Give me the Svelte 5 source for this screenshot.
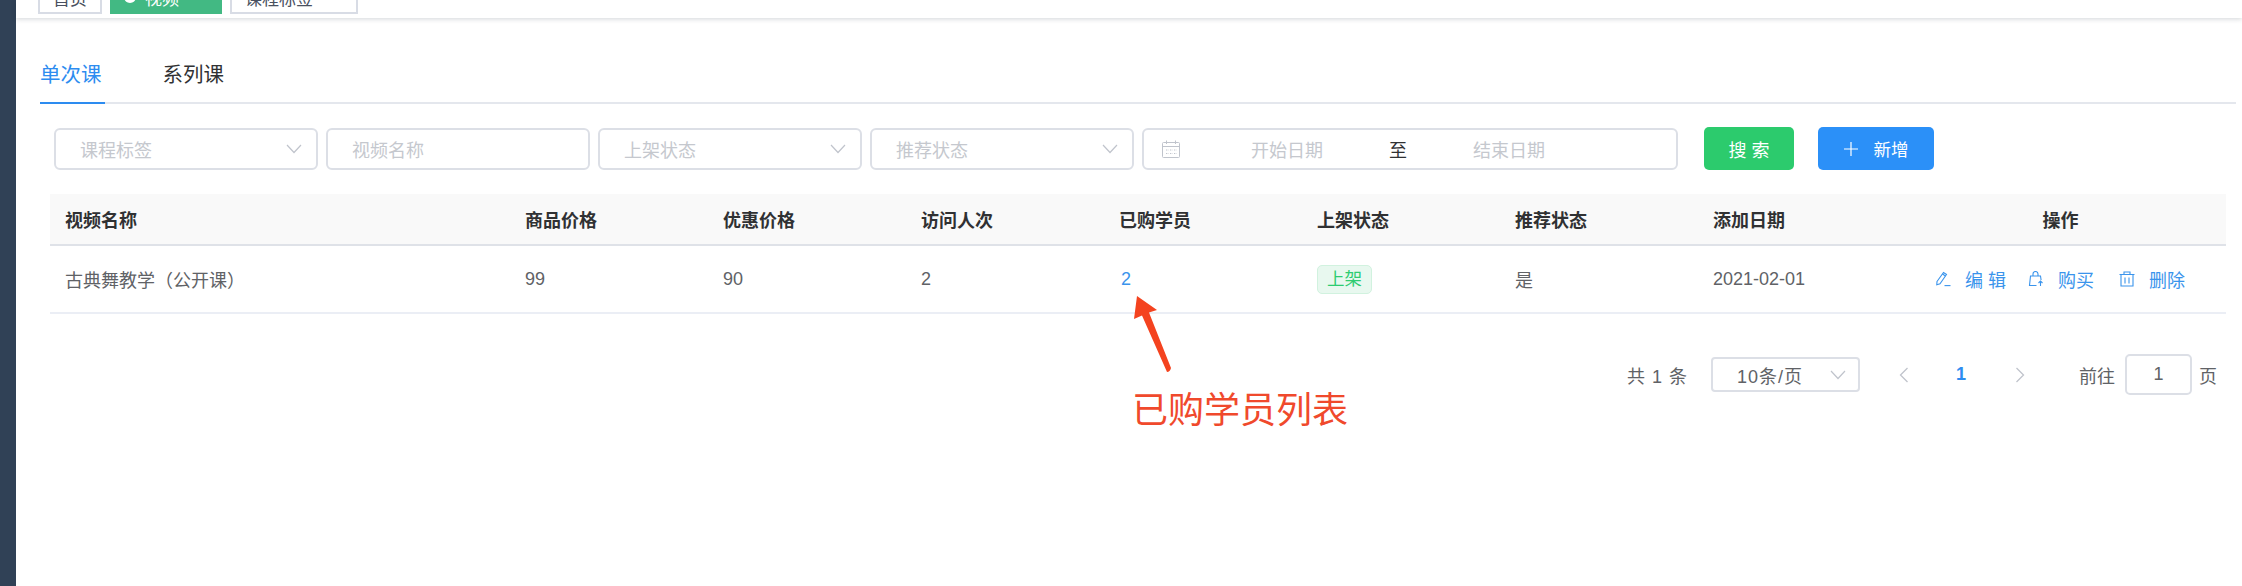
<script>
  const columns = [
    { label: '视频名称', width: 460 },
    { label: '商品价格', width: 198 },
    { label: '优惠价格', width: 198 },
    { label: '访问人次', width: 198 },
    { label: '已购学员', width: 198 },
    { label: '上架状态', width: 198 },
    { label: '推荐状态', width: 198 },
    { label: '添加日期', width: 198 },
    { label: '操作', width: 329, center: true }
  ];
</script>

{#snippet chevron()}
  <svg class="chev" viewBox="0 0 16 10" width="16" height="10"><path d="M1 1l7 7.5L15 1" fill="none" stroke="currentColor" stroke-width="1.2"/></svg>
{/snippet}

<div class="app">
  <aside class="side"></aside>
  <main class="main">
    <div class="topbar">
      <span class="tag">首页</span>
      <span class="tag active"><i class="dot"></i>视频</span>
      <span class="tag wide">课程标签</span>
    </div>

    <div class="content">
      <div class="tabs">
        <span class="tab on">单次课</span>
        <span class="tab">系列课</span>
      </div>

      <div class="filters">
        <div class="field"><span class="ph">课程标签</span>{@render chevron()}</div>
        <div class="field"><span class="ph">视频名称</span></div>
        <div class="field"><span class="ph">上架状态</span>{@render chevron()}</div>
        <div class="field"><span class="ph">推荐状态</span>{@render chevron()}</div>
        <div class="field date">
          <svg class="cal" viewBox="0 0 18 18" width="18" height="18" fill="none" stroke="currentColor" stroke-width="1">
            <rect x="0.5" y="2.5" width="17" height="15" rx="1"/>
            <path d="M0.5 6.5h17M4.5 0.5v3.5M13.5 0.5v3.5"/>
            <path d="M4 10h2.4M8 10h2.4M12 10h2.4M4 13.5h2.4M8 13.5h2.4M12 13.5h2.4" stroke-dasharray="1 .7"/>
          </svg>
          <span class="ph d1">开始日期</span>
          <span class="to">至</span>
          <span class="ph d2">结束日期</span>
        </div>
        <button class="btn search">搜 索</button>
        <button class="btn add">
          <svg class="plus" viewBox="0 0 14 14" width="14" height="14"><path d="M7 0v14M0 7h14" stroke="currentColor" stroke-width="1.2" fill="none"/></svg>
          新增
        </button>
      </div>

      <div class="table">
        <div class="row head">
          {#each columns as c}
            <div class="cell" class:center={c.center} style:width="{c.width}px">{c.label}</div>
          {/each}
        </div>
        <div class="row body">
          <div class="cell" style:width="460px">古典舞教学（公开课）</div>
          <div class="cell" style:width="198px">99</div>
          <div class="cell" style:width="198px">90</div>
          <div class="cell" style:width="198px">2</div>
          <div class="cell link" style:width="198px">2</div>
          <div class="cell" style:width="198px"><span class="status">上架</span></div>
          <div class="cell" style:width="198px">是</div>
          <div class="cell" style:width="198px">2021-02-01</div>
          <div class="cell ops" style:width="329px">
            <span class="op">
              <svg viewBox="0 0 16 16" width="16" height="16" fill="none" stroke="currentColor" stroke-width="1.1">
                <path d="M2 10.5L8.5 1.5l3 2L5 12.8l-3.2 1z"/><path d="M7.5 3l3 2"/><path d="M9.5 14.6h6"/>
              </svg>
              <span class="t1">编 辑</span>
            </span>
            <span class="op">
              <svg viewBox="0 0 16 16" width="16" height="16" fill="none" stroke="currentColor" stroke-width="1.1">
                <path d="M8.5 14.5H1.5l1-9.5h10l.6 4"/><path d="M5 5V3a2.5 2.5 0 0 1 5 0v2"/><path d="M12.5 15V10M10.5 12l2-2 2 2"/>
              </svg>
              <span class="t2">购买</span>
            </span>
            <span class="op">
              <svg viewBox="0 0 16 16" width="16" height="16" fill="none" stroke="currentColor" stroke-width="1.1">
                <path d="M.5 3.5h15M5 3.5V1h6v2.5M2 3.5v11.5h12V3.5M6 6.5v6M10 6.5v6"/>
              </svg>
              <span class="t3">删除</span>
            </span>
          </div>
        </div>
      </div>

      <div class="pager">
        <span class="total">共 1 条</span>
        <div class="size"><span class="size-text">10条/页</span>{@render chevron()}</div>
        <svg class="nav prev" viewBox="0 0 10 16" width="10" height="16"><path d="M8.5 1L1.5 8l7 7" fill="none" stroke="currentColor" stroke-width="1.3"/></svg>
        <span class="num">1</span>
        <svg class="nav next" viewBox="0 0 10 16" width="10" height="16"><path d="M1.5 1l7 7-7 7" fill="none" stroke="currentColor" stroke-width="1.3"/></svg>
        <span class="goto">前往</span>
        <span class="jump">1</span>
        <span class="page">页</span>
      </div>
    </div>
  </main>

  <svg class="arrow" viewBox="0 0 44 80" width="44" height="80">
    <path d="M7 0L27 14L19 16.5L41 72Q40 76 37 76L12 19.5L4 23Z" fill="#f4431f"/>
  </svg>
  <div class="note">已购学员列表</div>
</div>

<style>
  :global(body) { margin: 0; background: #fff; }
  .app {
    position: relative;
    display: flex;
    width: 2242px;
    height: 586px;
    overflow: hidden;
    font-family: "Liberation Sans", "Noto Sans CJK SC", sans-serif;
    color: #606266;
  }
  .side { width: 16px; flex: none; background: #304156; }
  .main { flex: 1; min-width: 0; }

  .topbar {
    height: 18px;
    box-sizing: border-box;
    padding: 0 0 4px 22px;
    display: flex;
    align-items: flex-end;
    gap: 8px;
    box-shadow: 0 1px 5px rgba(0, 21, 41, .18);
    position: relative;
  }
  .tag {
    flex: none;
    height: 34px;
    box-sizing: border-box;
    width: 64px;
    border: 2px solid #d8dce5;
    padding-left: 13px;
    display: flex;
    align-items: center;
    font-size: 17px;
    color: #495060;
  }
  .tag.active { width: 112px; padding-left: 12px; background: #42b983; border-color: #42b983; color: #fff; }
  .tag.wide { width: 128px; }
  .dot { width: 12px; height: 12px; border-radius: 50%; background: #fff; margin-right: 9px; }

  .content { padding: 0 6px 0 24px; }
  .tabs {
    height: 86px;
    box-sizing: border-box;
    display: flex;
    align-items: flex-end;
    gap: 58px;
    border-bottom: 2px solid #e4e7ed;
  }
  .tab {
    font-size: 20.5px;
    line-height: 28px;
    padding: 0 3px 13px 0;
    margin-bottom: -2px;
    color: #303133;
    border-bottom: 2px solid transparent;
  }
  .tab.on { color: #2d8cf0; border-bottom-color: #2d8cf0; }

  .filters {
    margin: 23px 0 0 14px;
    display: flex;
    align-items: center;
    gap: 8px;
  }
  .field {
    position: relative;
    width: 264px;
    height: 42px;
    box-sizing: border-box;
    border: 2px solid #dcdfe6;
    border-radius: 6px;
    padding-left: 24px;
    display: flex;
    align-items: center;
    justify-content: space-between;
    padding-right: 14px;
    font-size: 18px;
    background: #fff;
  }
  .ph { color: #c5c8ce; white-space: nowrap; }
  .chev { color: #c0c4cc; flex: none; }
  .date { width: 536px; justify-content: flex-start; padding-left: 18px; }
  .cal { color: #c0c4cc; flex: none; }
  .d1 { margin-left: 71px; }
  .to { margin-left: 66px; color: #303133; }
  .d2 { margin-left: 66px; }

  .btn {
    height: 43px;
    border: 0;
    border-radius: 5px;
    color: #fff;
    font: inherit;
    font-size: 18px;
    padding: 0;
  }
  .search { width: 90px; margin-left: 18px; background: #2ccb6d; }
  .add { width: 116px; margin-left: 16px; background: #2b90f8; display: flex; align-items: center; justify-content: center; font-size: 17.5px; }
  .plus { margin-right: 16px; flex: none; }

  .table { margin: 24px 0 0 10px; width: 2176px; }
  .row { display: flex; align-items: center; box-sizing: border-box; }
  .head {
    height: 52px;
    background: #f9f9f9;
    border-bottom: 2px solid #dfe2e8;
    font-weight: 700;
    font-size: 18px;
    color: #303133;
  }
  .body {
    height: 68px;
    border-bottom: 2px solid #ebeef5;
    font-size: 18px;
  }
  .cell { box-sizing: border-box; padding-left: 15px; flex: none; white-space: nowrap; }
  .center { text-align: center; padding-left: 0; }
  .link { color: #3a94ec; padding-left: 17px; }
  .status {
    display: inline-block;
    box-sizing: border-box;
    width: 55px;
    height: 29px;
    line-height: 26px;
    text-align: center;
    border-radius: 5px;
    background: #e8f8ef;
    border: 1px solid #d1f2df;
    color: #2ecc71;
    font-size: 17.5px;
  }
  .ops { display: flex; align-items: center; padding-left: 39px; color: #3a94ec; }
  .op { display: flex; align-items: center; }
  .op svg { flex: none; }
  .op:nth-child(2) { margin-left: 21px; }
  .op:nth-child(3) { margin-left: 25px; }
  .t1, .t2, .t3 { margin-left: 14px; }
  .t1 { width: 42px; }
  .t2 { width: 36px; }

  .pager {
    margin-top: 40px;
    height: 41px;
    display: flex;
    align-items: center;
    font-size: 18px;
    color: #606266;
  }
  .total { margin-left: 1587px; width: 60px; word-spacing: 2px; white-space: nowrap; }
  .size {
    width: 149px;
    height: 35px;
    box-sizing: border-box;
    margin-left: 24px;
    border: 2px solid #dcdfe6;
    border-radius: 4px;
    display: flex;
    align-items: center;
    justify-content: space-between;
    padding: 0 12px 0 24px;
  }
  .size-text { letter-spacing: 1px; }
  .nav { color: #c0c4cc; flex: none; }
  .prev { margin-left: 39px; }
  .num { margin-left: 47px; width: 10px; font-weight: 700; color: #2d8cf0; }
  .next { margin-left: 49px; }
  .goto { margin-left: 54px; width: 36px; }
  .jump {
    width: 67px;
    height: 41px;
    box-sizing: border-box;
    margin-left: 10px;
    border: 2px solid #dcdfe6;
    border-radius: 5px;
    display: flex;
    align-items: center;
    justify-content: center;
  }
  .page { margin-left: 7px; }

  .arrow { position: absolute; left: 1130px; top: 296px; }
  .note {
    position: absolute;
    left: 1132px;
    top: 387px;
    font-size: 36px;
    line-height: 48px;
    color: #f0492c;
    white-space: nowrap;
  }
</style>
